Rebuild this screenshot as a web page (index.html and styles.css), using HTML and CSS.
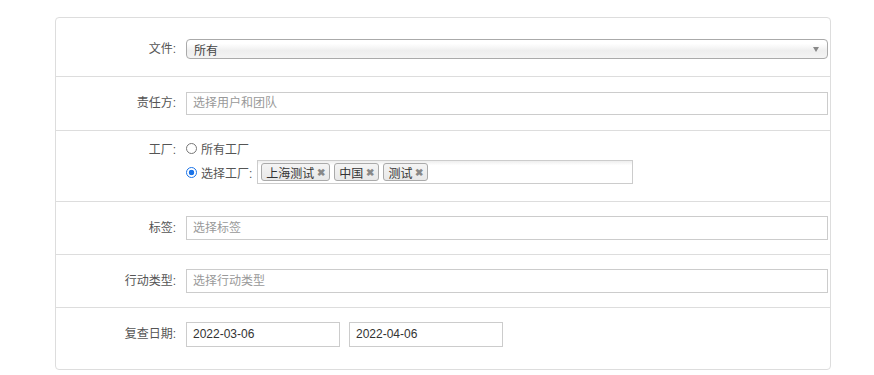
FILE: index.html
```html
<!DOCTYPE html>
<html lang="zh-CN">
<head>
    <meta charset="UTF-8">
    <meta name="viewport" content="width=device-width, initial-scale=1.0">
    <title>筛选</title>
    <link rel="stylesheet" href="styles.css">
</head>
<body>
    <div class="panel">
        <div class="row row-file">
            <label class="label">文件:</label>
            <div class="field">
                <div class="select">
                    <span>所有</span>
                    <span class="arrow"></span>
                </div>
            </div>
        </div>

        <div class="row row-owner">
            <label class="label">责任方:</label>
            <div class="field">
                <div class="input placeholder">选择用户和团队</div>
            </div>
        </div>

        <div class="row row-factory">
            <label class="label">工厂:</label>
            <div class="field">
                <div class="radio-line">
                    <span class="radio"></span>
                    <span>所有工厂</span>
                </div>
                <div class="radio-line">
                    <span class="radio checked"></span>
                    <span>选择工厂:</span>
                    <div class="tag-box">
                        <span class="tag">上海测试 <b>&#x2716;</b></span>
                        <span class="tag">中国 <b>&#x2716;</b></span>
                        <span class="tag">测试 <b>&#x2716;</b></span>
                    </div>
                </div>
            </div>
        </div>

        <div class="row row-tags">
            <label class="label">标签:</label>
            <div class="field">
                <div class="input placeholder">选择标签</div>
            </div>
        </div>

        <div class="row row-action">
            <label class="label">行动类型:</label>
            <div class="field">
                <div class="input placeholder">选择行动类型</div>
            </div>
        </div>

        <div class="row row-date">
            <label class="label">复查日期:</label>
            <div class="field dates">
                <div class="input date">2022-03-06</div>
                <div class="input date">2022-04-06</div>
            </div>
        </div>
    </div>
</body>
</html>
```

FILE: styles.css
```css
body {
    margin: 0;
    padding: 0;
    background: #fff;
    font-family: "Liberation Sans", "Noto Sans CJK SC", sans-serif;
    font-size: 12px;
    color: #333;
}

.panel {
    width: 774px;
    margin: 17px 0 0 55px;
    border: 1px solid #ddd;
    border-radius: 4px;
}

.row {
    display: flex;
    align-items: flex-start;
    border-bottom: 1px solid #ddd;
    padding-right: 2px;
}

.row:last-child {
    border-bottom: none;
}

.label {
    width: 120px;
    padding-right: 10px;
    text-align: right;
    color: #555;
    line-height: 20px;
    flex-shrink: 0;
}

.field {
    flex: 1;
}

.row-file { padding-top: 21px; padding-bottom: 17px; }
.row-owner { padding-top: 15px; padding-bottom: 15px; }
.row-factory { padding-top: 9px; padding-bottom: 17px; }
.row-tags { padding-top: 14px; padding-bottom: 14px; }
.row-action { padding-top: 14px; padding-bottom: 14px; }
.row-date { padding-top: 14px; padding-bottom: 22px; }

.row-owner .label { line-height: 23px; }
.row-tags .label,
.row-action .label { line-height: 24px; }
.row-date .label { line-height: 25px; }

.select {
    display: flex;
    justify-content: space-between;
    align-items: center;
    height: 18px;
    padding: 0 8px 0 7px;
    border: 1px solid #aaa;
    border-radius: 4px;
    background: linear-gradient(#fff 20%, #eee 60%, #f4f4f4);
    color: #444;
}

.arrow {
    width: 0;
    height: 0;
    border-left: 3px solid transparent;
    border-right: 3px solid transparent;
    border-top: 5px solid #888;
}

.input {
    box-sizing: border-box;
    height: 23px;
    line-height: 21px;
    padding: 0 6px;
    border: 1px solid #ccc;
    background: #fff;
}

.row-tags .input,
.row-action .input { height: 24px; line-height: 22px; }

.placeholder {
    color: #999;
}

.radio-line {
    display: flex;
    align-items: center;
    gap: 4px;
    color: #555;
}

.radio-line + .radio-line {
    margin-top: 3px;
}

.radio {
    box-sizing: border-box;
    width: 11px;
    height: 11px;
    border: 1px solid #777;
    border-radius: 50%;
}

.radio.checked {
    border: 1px solid #1a73e8;
    background: radial-gradient(#1a73e8 40%, #fff 48%);
}

.tag-box {
    box-sizing: border-box;
    width: 376px;
    height: 24px;
    margin-left: 1px;
    padding: 2px 3px;
    display: flex;
    gap: 4px;
    border: 1px solid #ccc;
    background: linear-gradient(#eee, #fff 20%);
}

.tag {
    display: inline-flex;
    align-items: center;
    gap: 3px;
    height: 16px;
    padding: 0 4px;
    border: 1px solid #aaa;
    border-radius: 3px;
    background: linear-gradient(#f4f4f4, #e8e8e8);
    color: #333;
}

.tag b {
    font-size: 10px;
    color: #888;
}

.dates {
    display: flex;
    gap: 9px;
}

.input.date {
    width: 154px;
    height: 25px;
    line-height: 23px;
    color: #333;
}
```
